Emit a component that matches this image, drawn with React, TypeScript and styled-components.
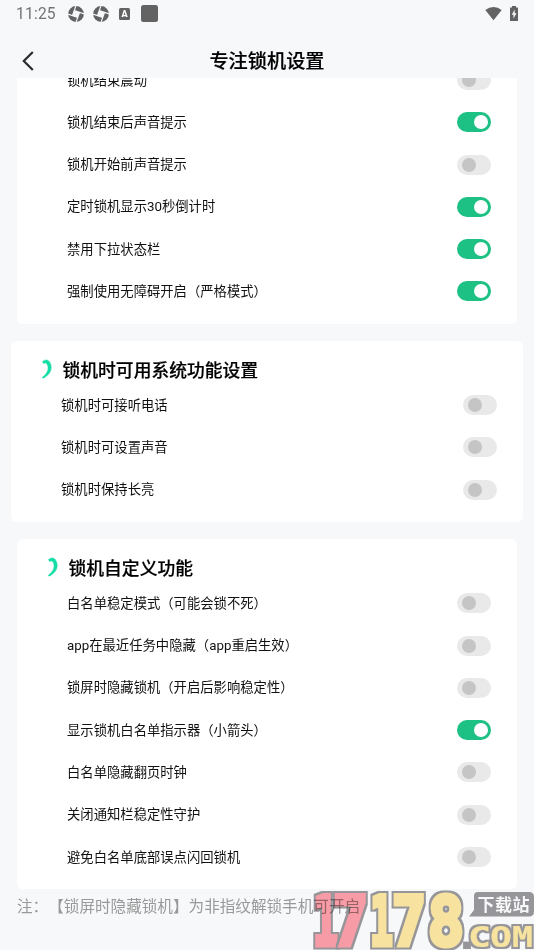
import React from 'react';
import styled, { createGlobalStyle } from 'styled-components';

const Global = createGlobalStyle`
  * { box-sizing: border-box; }
  html, body { margin: 0; background: #f7f8fa; }
  body { font-family: Roboto, "Noto Sans CJK SC", sans-serif; color: #111; overflow: hidden; text-spacing-trim: space-all; }
`;

const Screen = styled.div`
  position: relative;
  width: 534px;
  height: 950px;
  overflow: hidden;
  display: flex;
  flex-direction: column;
  background: #f7f8fa;
`;

const StatusBar = styled.div`
  flex: none;
  height: 27px;
  display: flex;
  justify-content: space-between;
  padding: 0 15px 0 16px;
  color: #636363;
`;

const StatusGroup = styled.div<{ $gap: number }>`
  display: flex;
  align-items: center;
  gap: ${(p) => p.$gap}px;
  svg { display: block; }
`;

const Clock = styled.span`
  width: 43.5px;
  font-size: 15.6px;
  letter-spacing: 0.2px;
  line-height: 20px;
  padding-top: 1px;
  color: #737373;
  white-space: nowrap;
`;

const Header = styled.header`
  flex: none;
  height: 51px;
  display: grid;
  grid-template-columns: 60px 1fr 60px;
  align-items: center;
  padding-top: 17px;
`;

const BackButton = styled.button`
  border: 0;
  background: none;
  padding: 0 0 0 20px;
  display: flex;
`;

const HeaderTitle = styled.h1`
  margin: 0;
  padding-top: 2px;
  text-align: center;
  font-size: 19.2px;
  line-height: 28px;
  font-weight: 500;
  -webkit-text-stroke: 0.2px #000;
  color: #000;
`;

const Scroller = styled.main`
  flex: 1;
  min-height: 0;
  overflow: hidden;
  display: flex;
  flex-direction: column;
  gap: 17.5px;
`;

const Card = styled.section<{ $wide?: boolean; $cut?: boolean }>`
  flex: none;
  margin: ${(p) => (p.$cut ? '-19.2px' : '0')} ${(p) => (p.$wide ? 11 : 17)}px 0;
  padding: 0 26px 11px 50px;
  border-radius: 6px;
  background: #fff;
`;

const CardHead = styled.div`
  height: 42.8px;
  margin-left: -20.5px;
  padding-top: 17px;
  display: flex;
  align-items: flex-start;
  gap: 10px;
  svg { display: block; margin-top: 1px; }
`;

const CardTitle = styled.h2`
  margin: 0;
  font-size: 17.8px;
  line-height: 26px;
  font-weight: 500;
  -webkit-text-stroke: 0.2px #000;
  color: #000;
`;

const Row = styled.div`
  height: 42.3px;
  display: flex;
  align-items: center;
  justify-content: space-between;
`;

const RowLabel = styled.span`
  font-size: 13.33px;
  line-height: 20px;
  padding-top: 1.2px;
  white-space: nowrap;
`;

const Switch = styled.span<{ $on: boolean }>`
  width: 34px;
  height: 20px;
  padding: 0 3px 0 5px;
  border-radius: 10px;
  display: flex;
  align-items: center;
  justify-content: ${(p) => (p.$on ? 'flex-end' : 'flex-start')};
  background: ${(p) => (p.$on ? '#1dc183' : '#e9e9e9')};
`;

const Knob = styled.span<{ $on: boolean }>`
  width: 14px;
  height: 14px;
  border-radius: 50%;
  background: ${(p) => (p.$on ? '#fff' : '#c5c5c5')};
`;

const Note = styled.p`
  margin: -12.5px 17px 0;
  font-size: 15.6px;
  line-height: 26px;
  color: #999;
  white-space: nowrap;
`;

const Watermark = styled.svg`
  position: absolute;
  right: 0;
  bottom: 0;
  mix-blend-mode: multiply;
`;

const Shutter = () => (
  <svg width="16" height="16" viewBox="0 0 16 16">
    <circle cx="8" cy="8" r="7.9" fill="currentColor" />
    <path d="M6.3 4.4 11.600 6.300 9.700 11.600 4.400 9.700Z" fill="#f7f8fa" />
    <path
      d="M4.400 9.700 7.900 0M6.300 4.400 16 7.900M11.600 6.300 8.100 16M9.700 11.600 0 8.100"
      stroke="#f7f8fa"
      strokeWidth="1.1"
    />
  </svg>
);

const LetterTile = styled.span`
  width: 11px;
  height: 12px;
  margin: 0 2.5px 0 2px;
  border-radius: 1.5px;
  background: #636363;
  color: #fff;
  font-size: 9px;
  line-height: 12px;
  font-weight: 900;
  text-align: center;
`;

const BlockTile = styled.span`
  width: 17px;
  height: 17px;
  border-radius: 2.5px;
  background: #636363;
`;

const Arc = () => (
  <svg width="12" height="20" viewBox="0 0 12 20">
    <path
      d="M1.500 2.500C4 .4 6.700.4 8.400 2.700C12.200 8.400 10 15.200 2.200 19.200L1.200 18.400C7 14.200 8.300 9.200 6 5C5 3.600 4 3.600 2.600 4.600Z"
      fill="#14dda6"
      stroke="#14dda6"
      strokeWidth="0.5"
    />
  </svg>
);

type Item = [label: string, on: boolean];

const reminders: Item[] = [
  ['锁机结束震动', false],
  ['锁机结束后声音提示', true],
  ['锁机开始前声音提示', false],
  ['定时锁机显示30秒倒计时', true],
  ['禁用下拉状态栏', true],
  ['强制使用无障碍开启（严格模式）', true],
];

const system: Item[] = [
  ['锁机时可接听电话', false],
  ['锁机时可设置声音', false],
  ['锁机时保持长亮', false],
];

const custom: Item[] = [
  ['白名单稳定模式（可能会锁不死）', false],
  ['app在最近任务中隐藏（app重启生效）', false],
  ['锁屏时隐藏锁机（开启后影响稳定性）', false],
  ['显示锁机白名单指示器（小箭头）', true],
  ['白名单隐藏翻页时钟', false],
  ['关闭通知栏稳定性守护', false],
  ['避免白名单底部误点闪回锁机', false],
];

const Rows = ({ items }: { items: Item[] }) => (
  <>
    {items.map(([label, on]) => (
      <Row key={label}>
        <RowLabel>{label}</RowLabel>
        <Switch $on={on} role="switch" aria-checked={on}>
          <Knob $on={on} />
        </Switch>
      </Row>
    ))}
  </>
);

const red = '#ffa0a9';
const yellow = '#ffeaa2';

const marks = [
  { ch: '1', x: 313, w: 25, fill: red, size: 68 },
  { ch: '7', x: 333, w: 35, fill: red, size: 68 },
  { ch: '1', x: 370, w: 23, fill: yellow, size: 68 },
  { ch: '7', x: 392, w: 34, fill: yellow, size: 68 },
  { ch: '8', x: 428, w: 36, fill: yellow, size: 68 },
  { ch: '.', x: 460, w: 14, fill: '#9b999c', size: 18 },
  { ch: 'C', x: 468, w: 23, fill: yellow, size: 28 },
  { ch: 'O', x: 490, w: 22, fill: yellow, size: 28 },
  { ch: 'M', x: 512, w: 21, fill: yellow, size: 28 },
];

const SiteMark = () => (
  <Watermark width="234" height="66" viewBox="300 884 234 66">
    <defs>
      <filter id="rim" filterUnits="userSpaceOnUse" x="300" y="884" width="234" height="66" colorInterpolationFilters="sRGB">
        <feMorphology in="SourceAlpha" operator="dilate" radius="2" result="fat" />
        <feFlood floodColor="#9b999c" />
        <feComposite in2="fat" operator="in" result="edge" />
        <feMerge>
          <feMergeNode in="edge" />
          <feMergeNode in="SourceGraphic" />
        </feMerge>
      </filter>
    </defs>
    <g fontFamily="'DejaVu Sans Mono', monospace" fontWeight="700" strokeLinejoin="miter">
      {marks.map((d) => (
        <text
          key={d.x}
          x={d.x}
          y={d.size > 50 ? 944.5 : 946.5}
          fontSize={d.size}
          fill={d.fill}
          stroke={d.fill}
          strokeWidth={d.size > 50 ? 5 : 0.2}
          textLength={d.w}
          lengthAdjust="spacingAndGlyphs"
          filter="url(#rim)"
        >
          {d.ch}
        </text>
      ))}
    </g>
    <path d="M478 892H529Q534 892 534 897V911.500Q534 916.500 529 916.500H469L474 910V896Q474 892 478 892Z" fill="#9b999c" />
    <text x="477.500" y="911" fontFamily="'Noto Sans CJK SC', sans-serif" fontSize="17" fontWeight="700" fill="#fff" textLength="52">
      下载站
    </text>
  </Watermark>
);

export default function App() {
  return (
    <Screen>
      <Global />
      <StatusBar>
        <StatusGroup $gap={8.5}>
          <Clock>11:25</Clock>
          <Shutter />
          <Shutter />
          <LetterTile>A</LetterTile>
          <BlockTile />
        </StatusGroup>
        <StatusGroup $gap={7}>
          <svg width="18" height="16" viewBox="0 0 18 16">
            <path d="M.3 4Q8.500-2.200 16.700 4L8.500 14.200Z" fill="currentColor" />
          </svg>
          <svg width="9" height="16" viewBox="0 0 9 16">
            <path d="M2 1.500V0h4v1.500H8V15H0V1.500Z" fill="currentColor" />
            <path d="M4.700 3.500 1.700 8.800H3.500V12.500L6.500 7.200H4.700Z" fill="#f7f8fa" />
          </svg>
        </StatusGroup>
      </StatusBar>
      <Header>
        <BackButton aria-label="返回">
          <svg width="16" height="22" viewBox="0 0 16 22">
            <path d="M12.800 2 3.800 11l9 9" fill="none" stroke="#2b2b2e" strokeWidth="2.200" />
          </svg>
        </BackButton>
        <HeaderTitle>专注锁机设置</HeaderTitle>
      </Header>
      <Scroller>
        <Card $cut>
          <Rows items={reminders} />
        </Card>
        <Card $wide>
          <CardHead>
            <Arc />
            <CardTitle>锁机时可用系统功能设置</CardTitle>
          </CardHead>
          <Rows items={system} />
        </Card>
        <Card>
          <CardHead>
            <Arc />
            <CardTitle>锁机自定义功能</CardTitle>
          </CardHead>
          <Rows items={custom} />
        </Card>
        <Note>注：【锁屏时隐藏锁机】为非指纹解锁手机可开启</Note>
      </Scroller>
      <SiteMark />
    </Screen>
  );
}
